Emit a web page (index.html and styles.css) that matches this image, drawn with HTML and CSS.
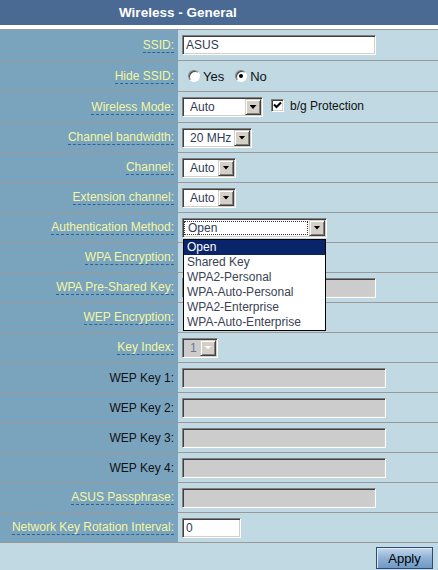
FILE: index.html
```html
<!DOCTYPE html>
<html lang="en">
<head>
  <meta charset="UTF-8" />
  <title>Wireless - General</title>
  <link rel="stylesheet" href="styles.css">
</head>
<body>

  <div class="title">Wireless - General</div>
  <div class="gap"></div>

  <div class="form">
    <div class="row tall">
      <div class="label"><span class="hint">SSID:</span></div>
      <div class="field"><input class="text w194" type="text" value="ASUS" /></div>
    </div>
    <div class="row tall">
      <div class="label"><span class="hint">Hide SSID:</span></div>
      <div class="field">
        <span class="radio"></span><span class="opt">Yes</span>
        <span class="radio on"></span><span class="opt">No</span>
      </div>
    </div>
    <div class="row tall">
      <div class="label"><span class="hint">Wireless Mode:</span></div>
      <div class="field">
        <span class="combo w81"><span class="combo-text">Auto</span><span class="combo-btn"></span></span>
        <span class="check"><svg width="9" height="9" viewBox="0 0 9 9"><path d="M1 3.5l2.5 2.5L8 1.5" stroke="#000" stroke-width="2" fill="none"/></svg></span>
        <span class="plain">b/g Protection</span>
      </div>
    </div>
    <div class="row">
      <div class="label"><span class="hint">Channel bandwidth:</span></div>
      <div class="field">
        <span class="combo w70"><span class="combo-text">20 MHz</span><span class="combo-btn"></span></span>
      </div>
    </div>
    <div class="row">
      <div class="label"><span class="hint">Channel:</span></div>
      <div class="field">
        <span class="combo w54"><span class="combo-text">Auto</span><span class="combo-btn"></span></span>
      </div>
    </div>
    <div class="row">
      <div class="label"><span class="hint">Extension channel:</span></div>
      <div class="field">
        <span class="combo w54"><span class="combo-text">Auto</span><span class="combo-btn"></span></span>
      </div>
    </div>
    <div class="row">
      <div class="label"><span class="hint">Authentication Method:</span></div>
      <div class="field">
        <span class="drop">
          <span class="combo w145 focus"><span class="combo-text">Open</span><span class="combo-btn"></span></span>
          <ul class="list">
            <li class="sel">Open</li>
            <li>Shared Key</li>
            <li>WPA2-Personal</li>
            <li>WPA-Auto-Personal</li>
            <li>WPA2-Enterprise</li>
            <li>WPA-Auto-Enterprise</li>
          </ul>
        </span>
      </div>
    </div>
    <div class="row">
      <div class="label"><span class="hint">WPA Encryption:</span></div>
      <div class="field"></div>
    </div>
    <div class="row">
      <div class="label"><span class="hint">WPA Pre-Shared Key:</span></div>
      <div class="field"><input class="text w194" type="text" disabled /></div>
    </div>
    <div class="row">
      <div class="label"><span class="hint">WEP Encryption:</span></div>
      <div class="field"></div>
    </div>
    <div class="row">
      <div class="label"><span class="hint">Key Index:</span></div>
      <div class="field">
        <span class="combo w36 disabled"><span class="combo-text">1</span><span class="combo-btn"></span></span>
      </div>
    </div>
    <div class="row">
      <div class="label"><span class="dark">WEP Key 1:</span></div>
      <div class="field"><input class="text w204" type="text" disabled /></div>
    </div>
    <div class="row">
      <div class="label"><span class="dark">WEP Key 2:</span></div>
      <div class="field"><input class="text w204" type="text" disabled /></div>
    </div>
    <div class="row">
      <div class="label"><span class="dark">WEP Key 3:</span></div>
      <div class="field"><input class="text w204" type="text" disabled /></div>
    </div>
    <div class="row">
      <div class="label"><span class="dark">WEP Key 4:</span></div>
      <div class="field"><input class="text w204" type="text" disabled /></div>
    </div>
    <div class="row">
      <div class="label"><span class="hint">ASUS Passphrase:</span></div>
      <div class="field"><input class="text w194" type="text" disabled /></div>
    </div>
    <div class="row">
      <div class="label"><span class="hint">Network Key Rotation Interval:</span></div>
      <div class="field"><input class="text w59" type="text" value="0" /></div>
    </div>
    <div class="apply-row">
      <button class="apply">Apply</button>
    </div>
  </div>

</body>
</html>
```

FILE: styles.css
```css
:root {
  --head: #4b6a93;
  --left: #7aa3be;
  --right: #c0d9e2;
  --line: #999999;
  --hint: #f4f7a0;
  --ctl: #2f3a55;
  --face: #d4d0c8;
}

body {
  margin: 0;
  font-family: "Liberation Sans", Arial, sans-serif;
  font-size: 12px;
  background: var(--right);
  overflow: hidden;
}

.title {
  height: 25px;
  line-height: 25px;
  padding-left: 119px;
  background: var(--head);
  color: #fff;
  font-weight: bold;
  font-size: 13.5px;
}

.gap {
  height: 4px;
  background: #fff;
}

.form {
  border-top: 1px solid var(--line);
}

.row {
  display: flex;
  height: 29px;
  border-bottom: 1px solid var(--line);
}

.row.tall {
  height: 30px;
}

.label {
  width: 174px;
  padding-right: 4px;
  background: var(--left);
  display: flex;
  align-items: center;
  justify-content: flex-end;
}

.hint {
  color: var(--hint);
  border-bottom: 1px dashed #2a6496;
  line-height: 13px;
  padding-top: 1px;
}

.dark {
  color: #111;
}

.field {
  flex: 1;
  display: flex;
  align-items: center;
  padding-left: 4px;
}

/* sunken text boxes */
.text {
  box-sizing: border-box;
  height: 20px;
  margin: 0;
  padding: 0 3px;
  font-family: inherit;
  font-size: 12px;
  color: var(--ctl);
  background: #fff;
  border: 1px solid;
  border-color: #808080 #fff #fff #808080;
  box-shadow: inset 1px 1px #404040, inset -1px -1px var(--face);
  outline: none;
}

.text:disabled {
  background: #cccccc;
}

.w194 { width: 194px; }
.w204 { width: 204px; }
.w59 { width: 59px; }

/* radios and checkbox */
.radio {
  box-sizing: border-box;
  width: 12px;
  height: 12px;
  margin-left: 6px;
  border-radius: 50%;
  border: 1px solid;
  border-color: #808080 #fff #fff #808080;
  box-shadow: inset 1px 1px #404040;
  background: #fff;
  position: relative;
}

.radio.on::after {
  content: "";
  position: absolute;
  left: 3px;
  top: 3px;
  width: 4px;
  height: 4px;
  border-radius: 50%;
  background: #000;
}

.opt {
  margin-left: 3px;
  color: #111;
  font-size: 13px;
}

.opt + .radio {
  margin-left: 11px;
}

.check {
  box-sizing: border-box;
  width: 13px;
  height: 13px;
  margin-left: 8px;
  margin-top: -4px;
  border: 1px solid;
  border-color: #808080 #fff #fff #808080;
  box-shadow: inset 1px 1px #404040, inset -1px -1px var(--face);
  background: #fff;
  display: flex;
  align-items: center;
  justify-content: center;
}

.plain {
  margin-left: 6px;
  margin-top: -3px;
  color: #111;
}

/* classic combo boxes */
.combo {
  box-sizing: border-box;
  height: 20px;
  display: inline-flex;
  border: 1px solid;
  border-color: #808080 #fff #fff #808080;
  box-shadow: inset 1px 1px #404040, inset -1px -1px var(--face);
  background: #fff;
  padding: 1px;
}

.combo-text {
  flex: 1;
  padding-left: 6px;
  line-height: 16px;
  color: var(--ctl);
  white-space: nowrap;
  overflow: hidden;
}

.combo-btn {
  box-sizing: border-box;
  width: 16px;
  height: 16px;
  background: var(--face);
  border: 1px solid;
  border-color: var(--face) #404040 #404040 var(--face);
  box-shadow: inset 1px 1px #fff, inset -1px -1px #808080;
  display: flex;
  align-items: center;
  justify-content: center;
}

.combo-btn::after {
  content: "";
  width: 7px;
  height: 4px;
  background: #000;
  clip-path: polygon(0 0, 100% 0, 50% 100%);
}

.combo.disabled .combo-text {
  background: #cccccc;
  color: #6b7896;
}

.combo.disabled .combo-btn::after {
  background: #fff;
  box-shadow: 1px 1px #808080;
}

.combo.focus .combo-text {
  margin: 1px 1px 1px 0;
  line-height: 14px;
  padding-left: 4px;
  outline: 1px dotted #333;
  outline-offset: -1px;
}

.w81 { width: 81px; }
.w70 { width: 70px; }
.w54 { width: 54px; }
.w145 { width: 145px; }
.w36 { width: 36px; }

.drop {
  position: relative;
  display: inline-flex;
}

.list {
  position: absolute;
  top: 21px;
  left: 1px;
  z-index: 2;
  width: 143px;
  margin: 0;
  padding: 0;
  list-style: none;
  box-sizing: border-box;
  border: 1px solid #000;
  background: #fff;
}

.list li {
  height: 15px;
  line-height: 15px;
  padding-left: 3px;
  font-size: 12px;
  color: #3a4256;
}

.list li.sel {
  background: #0a246a;
  color: #fff;
}

.apply-row {
  display: flex;
  justify-content: flex-end;
  padding: 4px 5px 0 0;
}

.apply {
  width: 57px;
  height: 22px;
  padding: 0;
  font-family: inherit;
  font-size: 13px;
  color: #000;
  border: 1px solid #2c4a78;
  background: linear-gradient(#c4d8ec, #8fb2d6 50%, #6f98c4);
  box-shadow: inset 1px 1px #dfeaf5;
}
```
